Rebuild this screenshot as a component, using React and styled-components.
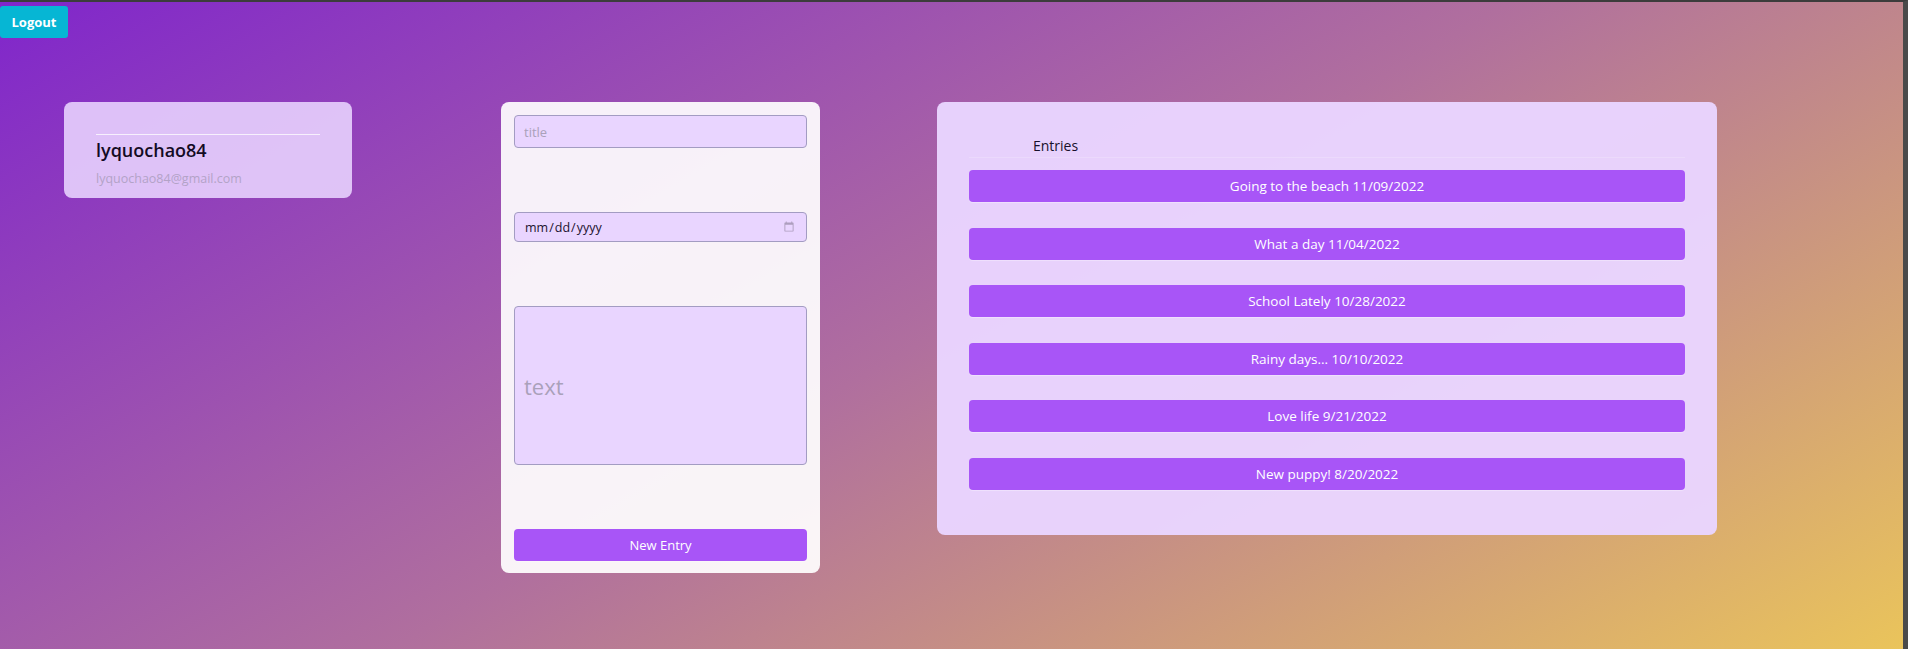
import React from "react";
import styled, { createGlobalStyle } from "styled-components";

const GlobalStyle = createGlobalStyle`
  * {
    box-sizing: border-box;
  }
  body {
    margin: 0;
    font-family: "Open Sans", "Noto Sans", sans-serif;
    background: #3b3b3b;
  }
`;

const Page = styled.div`
  min-height: 649px;
  border-top: 2px solid #3c3c3c;
  border-right: 5px solid #4a4a4a;
  background: linear-gradient(150deg, #8026cb 0%, #b06f9e 50%, #eac45b 100%);
`;

const TopBar = styled.div`
  display: flex;
  padding-top: 4px;
`;

const LogoutButton = styled.button`
  width: 68px;
  height: 32px;
  border: none;
  border-radius: 3px;
  background: #06b6d4;
  color: #fff;
  font-family: inherit;
  font-weight: 700;
  font-size: 13px;
  cursor: pointer;
`;

const Main = styled.div`
  display: flex;
  align-items: flex-start;
  padding: 64px 0 0 64px;
`;

const Card = styled.div`
  border-radius: 8px;
  width: ${p => p.width}px;
  margin-right: ${p => p.gap || 0}px;
`;

const ProfileCard = styled(Card)`
  background: rgba(233, 213, 255, 0.88);
  padding: 32px 32px 6px;
  height: 96px;
`;

const Divider = styled.div`
  height: 1px;
  background: rgba(255, 255, 255, 0.75);
`;

const UserName = styled.div`
  font-size: 18px;
  font-weight: 600;
  color: #140b24;
  line-height: 28px;
  margin-top: 1px;
`;

const Email = styled.div`
  font-size: 12.5px;
  color: #b3a3c7;
  margin-top: 6px;
`;

const FormCard = styled(Card)`
  background: rgba(255, 255, 255, 0.92);
  padding: 13px 13px 12px;
  display: flex;
  flex-direction: column;
  gap: 64px;
`;

const Field = styled.input`
  width: 100%;
  height: ${p => p.h}px;
  background: #e9d5ff;
  border: 1px solid #a39cc2;
  border-radius: 4px;
  padding: 0 9px;
  font-family: inherit;
  font-size: ${p => p.fs || 13}px;
  color: #1c1330;
  outline: none;
  &::placeholder {
    color: #aaa1ba;
  }
  &::-webkit-calendar-picker-indicator {
    opacity: 0.25;
  }
`;

const PurpleButton = styled.button`
  width: 100%;
  height: 32px;
  border: none;
  border-radius: 4px;
  background: #a855f7;
  color: #fff;
  font-family: inherit;
  font-size: ${p => p.fs || 13}px;
  box-shadow: 0 1px 1px rgba(255, 255, 255, 0.35);
  cursor: pointer;
`;

const EntriesCard = styled(Card)`
  background: rgba(233, 213, 255, 0.97);
  padding: 32px 32px 45px;
`;

const EntriesHeader = styled.div`
  height: 24px;
  line-height: 24px;
  padding-left: 64px;
  font-size: 14px;
  color: #17102a;
  border-bottom: 1px solid rgba(255, 255, 255, 0.18);
  margin-bottom: 12px;
`;

const EntryList = styled.div`
  display: flex;
  flex-direction: column;
  gap: 25.6px;
`;

const entries = [
  "Going to the beach 11/09/2022",
  "What a day 11/04/2022",
  "School Lately 10/28/2022",
  "Rainy days... 10/10/2022",
  "Love life 9/21/2022",
  "New puppy! 8/20/2022"
];

export default function App() {
  return (
    <Page>
      <GlobalStyle />
      <TopBar>
        <LogoutButton>Logout</LogoutButton>
      </TopBar>
      <Main>
        <ProfileCard width={288} gap={149}>
          <Divider />
          <UserName>lyquochao84</UserName>
          <Email>lyquochao84@gmail.com</Email>
        </ProfileCard>
        <FormCard width={319} gap={117}>
          <Field h={33} placeholder="title" />
          <Field h={30} type="date" fs={12.5} />
          <Field h={159} fs={22} placeholder="text" />
          <PurpleButton>New Entry</PurpleButton>
        </FormCard>
        <EntriesCard width={780}>
          <EntriesHeader>Entries</EntriesHeader>
          <EntryList>
            {entries.map((e, i) => (
              <PurpleButton key={i} fs={13.5}>
                {e}
              </PurpleButton>
            ))}
          </EntryList>
        </EntriesCard>
      </Main>
    </Page>
  );
}
